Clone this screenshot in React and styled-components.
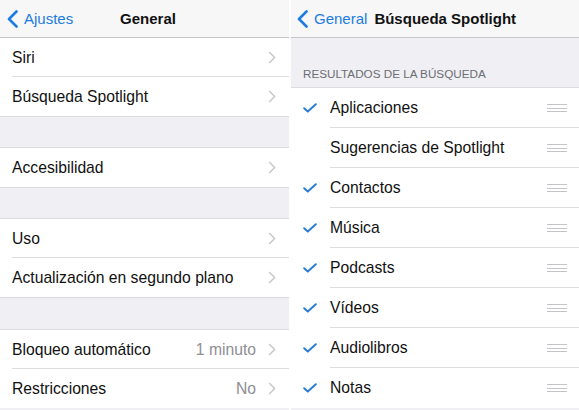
import React from 'react';
import styled, { createGlobalStyle } from 'styled-components';

const GlobalStyle = createGlobalStyle`
  html, body {
    margin: 0;
    padding: 0;
    background: #ffffff;
  }
  body {
    font-family: "Liberation Sans", Arial, sans-serif;
    -webkit-font-smoothing: antialiased;
  }
`;

const Page = styled.div`
  display: flex;
  gap: 2px;
  width: 579px;
  height: 410px;
  overflow: hidden;
  background: #ffffff;
`;

const Screen = styled.div`
  width: ${(p) => p.$width}px;
  flex: none;
  height: 100%;
  background: #efeff4;
  display: flex;
  flex-direction: column;
`;

const NavBar = styled.div`
  height: 38px;
  box-sizing: border-box;
  flex: none;
  background: #f7f7f8;
  border-bottom: 1px solid #c6c6ca;
  display: ${(p) => (p.$centered ? 'grid' : 'flex')};
  grid-template-columns: 1fr auto 1fr;
  align-items: center;
  padding-left: ${(p) => p.$padLeft}px;
  gap: ${(p) => p.$gap || 0}px;
`;

const BackButton = styled.div`
  display: flex;
  align-items: center;
  gap: 6px;
  color: #1c7ce0;
  font-size: 15px;
  justify-self: start;

  svg {
    display: block;
  }
`;

const NavTitle = styled.div`
  font-size: 15px;
  font-weight: bold;
  color: #111;
`;

const Group = styled.div`
  background: #ffffff;
  flex: none;
`;

const Gap = styled.div`
  height: ${(p) => p.$h}px;
  box-sizing: border-box;
  flex: none;
  border-top: 1px solid #dcdce0;
  border-bottom: 1px solid #dcdce0;
  background: #efeff4;
`;

const Row = styled.div`
  position: relative;
  height: ${(p) => p.$h}px;
  display: flex;
  align-items: center;
  padding-left: ${(p) => p.$pad}px;
  padding-right: 13px;
  font-size: 15.7px;
  color: #111;

  &:not(:last-child)::after {
    content: '';
    position: absolute;
    left: ${(p) => p.$inset}px;
    right: 0;
    bottom: 0;
    height: 1px;
    background: #dedee2;
  }
`;

const Label = styled.span`
  flex: 1;
  white-space: nowrap;
`;

const Value = styled.span`
  color: #8e8e93;
  margin-right: 12px;
`;

const CheckSlot = styled.div`
  width: 27px;
  flex: none;
  display: flex;
  align-items: center;

  svg {
    display: block;
  }
`;

const SectionHeader = styled.div`
  height: 50px;
  box-sizing: border-box;
  flex: none;
  display: flex;
  align-items: flex-end;
  padding: 0 0 7px 12px;
  font-size: 11.7px;
  color: #6d6d72;
  border-bottom: 1px solid #dcdce0;
`;

const Handle = styled.div`
  width: 20px;
  display: flex;
  flex-direction: column;
  gap: 2.5px;
  margin-right: -1px;

  span {
    height: 1px;
    background: #c4c4c8;
  }
`;

const BackChevron = () => (
  <svg width="11" height="18" viewBox="0 0 11 18">
    <path d="M9.5 1.5 L2 9 L9.5 16.5" fill="none" stroke="#1c7ce0" strokeWidth="2.6" strokeLinecap="round" strokeLinejoin="round" />
  </svg>
);

const Disclosure = () => (
  <svg width="8" height="13" viewBox="0 0 8 13">
    <path d="M1.2 1 L6.6 6.5 L1.2 12" fill="none" stroke="#c7c7cc" strokeWidth="1.5" />
  </svg>
);

const Check = () => (
  <svg width="14" height="10" viewBox="0 0 14 10">
    <path d="M1.2 5.2 L4.8 8.6 L12.8 1.2" fill="none" stroke="#2a7dd8" strokeWidth="2" strokeLinecap="round" strokeLinejoin="round" />
  </svg>
);

const generalGroups = [
  [{ label: 'Siri' }, { label: 'Búsqueda Spotlight' }],
  [{ label: 'Accesibilidad' }],
  [{ label: 'Uso' }, { label: 'Actualización en segundo plano' }],
  [{ label: 'Bloqueo automático', value: '1 minuto' }, { label: 'Restricciones', value: 'No' }],
];

const gapHeights = [32, 32, 33];

const results = [
  { label: 'Aplicaciones', checked: true },
  { label: 'Sugerencias de Spotlight', checked: false },
  { label: 'Contactos', checked: true },
  { label: 'Música', checked: true },
  { label: 'Podcasts', checked: true },
  { label: 'Vídeos', checked: true },
  { label: 'Audiolibros', checked: true },
  { label: 'Notas', checked: true },
];

const GeneralScreen = () => (
  <Screen $width={289}>
    <NavBar $centered $padLeft={7}>
      <BackButton>
        <BackChevron />
        <span>Ajustes</span>
      </BackButton>
      <NavTitle>General</NavTitle>
      <div />
    </NavBar>
    {generalGroups.map((group, i) => (
      <React.Fragment key={i}>
        {i > 0 && <Gap $h={gapHeights[i - 1]} />}
        <Group>
          {group.map((item) => (
            <Row key={item.label} $h={39} $pad={12} $inset={12}>
              <Label>{item.label}</Label>
              {item.value && <Value>{item.value}</Value>}
              <Disclosure />
            </Row>
          ))}
        </Group>
      </React.Fragment>
    ))}
  </Screen>
);

const SpotlightScreen = () => (
  <Screen $width={288}>
    <NavBar $padLeft={6} $gap={7}>
      <BackButton>
        <BackChevron />
        <span>General</span>
      </BackButton>
      <NavTitle>Búsqueda Spotlight</NavTitle>
    </NavBar>
    <SectionHeader>RESULTADOS DE LA BÚSQUEDA</SectionHeader>
    <Group>
      {results.map((item) => (
        <Row key={item.label} $h={40} $pad={12} $inset={39}>
          <CheckSlot>{item.checked && <Check />}</CheckSlot>
          <Label>{item.label}</Label>
          <Handle>
            <span />
            <span />
            <span />
          </Handle>
        </Row>
      ))}
    </Group>
  </Screen>
);

export default function App() {
  return (
    <>
      <GlobalStyle />
      <Page>
        <GeneralScreen />
        <SpotlightScreen />
      </Page>
    </>
  );
}
